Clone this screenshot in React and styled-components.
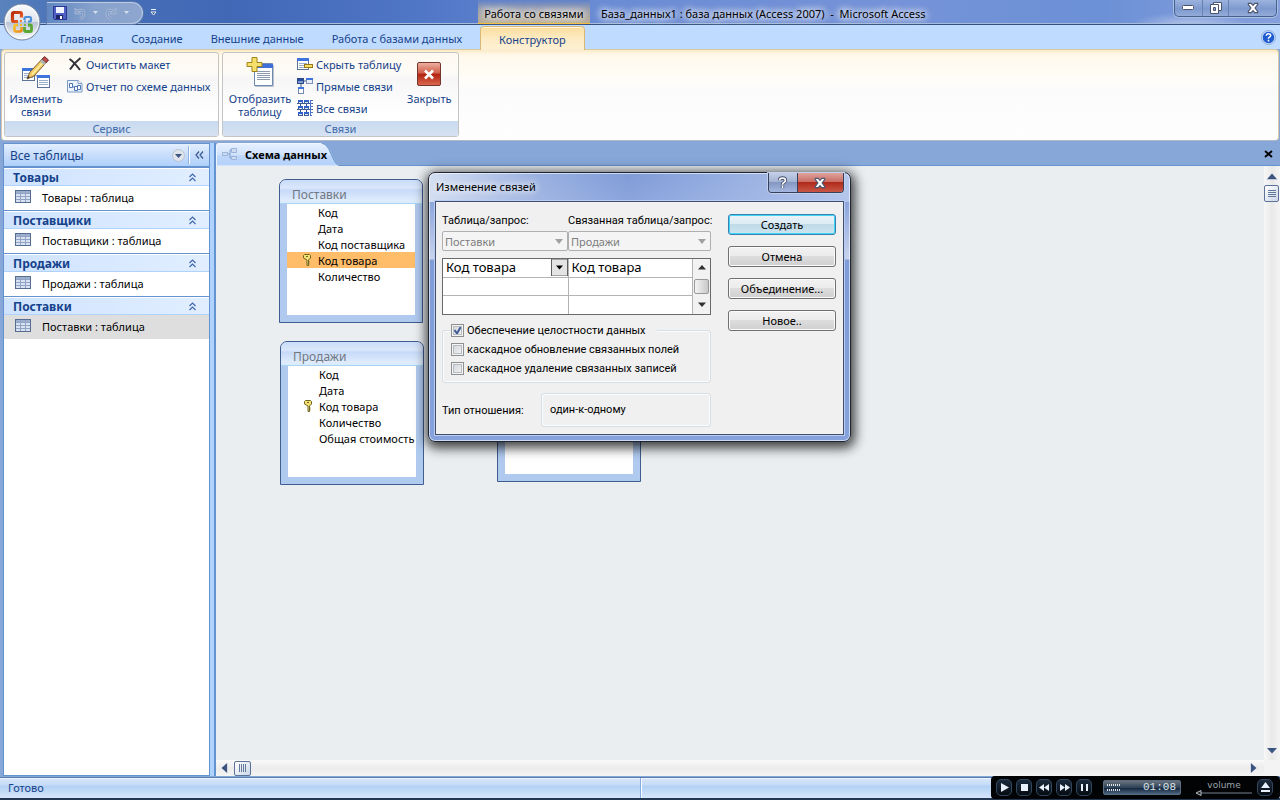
import React from "react";
import styled, { createGlobalStyle, css } from "styled-components";

const GlobalStyle = createGlobalStyle`
  *, *::before, *::after { box-sizing: border-box; }
  body { margin: 0; overflow: hidden; font-family: "Noto Sans", "Open Sans", sans-serif; font-size: 11px; line-height: 13px; color: #000; }
  button, select, input { font: inherit; color: inherit; margin: 0; padding: 0; }
  button { background: none; border: 0; }
  a { color: inherit; text-decoration: none; }
  svg { display: block; flex: none; }
  h1, h2, p, ul { margin: 0; padding: 0; font: inherit; list-style: none; }
`;

const Window = styled.div`
  position: relative;
  display: flex;
  flex-direction: column;
  height: 100vh;
  background: #86a7d8;
`;

/* ---------- title bar ---------- */
const TitleBar = styled.header`
  position: relative;
  display: flex;
  flex: none;
  height: 25px;
  background:
    radial-gradient(ellipse 60px 14px at 1190px 26px, #b9c8ea 0%, rgba(185, 200, 234, 0) 100%),
    linear-gradient(90deg, #5a83bd 0, #4a72b8 60px, #4068b5 230px, #5076c6 420px, #6a8cd4 600px, #7593d8 900px, #6c90d6 1100px, #86a0dc 1280px);
  border-bottom: 1px solid #33527f;
  box-shadow: inset 0 -1px #a5bcdc;
`;

const TitleStart = styled.div`
  flex: none;
  width: 478px;
  padding-left: 47px;
  display: flex;
  align-items: flex-start;
  gap: 7px;
`;

const OfficeButton = styled.button`
  position: absolute;
  left: 3px;
  top: 3px;
  z-index: 3;
`;

const QuickAccess = styled.div`
  display: flex;
  align-items: center;
  gap: 7px;
  width: 96px;
  height: 22px;
  margin-top: 2px;
  padding: 0 6px;
  border: 1px solid #b9cbe6;
  border-left: 0;
  border-radius: 0 12px 12px 0;
  box-shadow: 0 0 0 1px #5a78ac;
  background: linear-gradient(90deg, #6188c2, #87a2cc 50%, #8ea6cf);
`;

const QuickMore = styled.button`
  margin: 9px 0 0 0;
`;

const ContextTitle = styled.div`
  flex: none;
  width: 112px;
  height: 24px;
  padding-top: 7px;
  text-align: center;
  white-space: nowrap;
  background: linear-gradient(#5f82ca 0, #9b9fae 40%, #b9ad93 100%);
  border-bottom: 1px solid #f5bd35;
  text-shadow: 0 0 6px #fff, 0 0 8px #fff, 0 0 10px #fff;
`;

const WindowTitle = styled.h1`
  flex: 1;
  padding: 7px 0 0 11px;
  white-space: pre;
  text-shadow: 0 0 6px #fff, 0 0 8px #fff, 0 0 10px #fff;
`;

const CaptionButtons = styled.div`
  flex: none;
  display: flex;
  height: 17px;
  width: 103px;
  margin-right: 3px;
  border: 1px solid #47618f;
  border-top: 0;
  border-radius: 0 0 5px 5px;
  background: linear-gradient(#9cb3de, #7e99ce 55%, #93abd9);
  box-shadow: 0 0 0 1px #a9bfe4;
  overflow: hidden;
`;

const CaptionButton = styled.button`
  width: ${(p) => (p.$wide ? 48 : 27)}px;
  display: flex;
  align-items: center;
  justify-content: center;
  & + & { border-left: 1px solid #6781b4; }
`;

/* ---------- ribbon ---------- */
const TabRow = styled.nav`
  position: relative;
  display: flex;
  flex: none;
  align-items: stretch;
  height: 24px;
  padding-left: 46px;
  background: #bfdbff;
  color: #15428b;
`;

const Tab = styled.button`
  padding: 3px 14px 0;
  white-space: nowrap;
  ${(p) => p.$active && css`
    margin: 1px 0 -1px 4px;
    padding: 2px 18px 1px;
    border: 1px solid #dcb877;
    border-bottom: 0;
    border-radius: 4px 4px 0 0;
    background: linear-gradient(#fbdd9b, #fdebc4 50%, #fdf0d3);
    box-shadow: inset 0 1px #fff4d8;
    z-index: 1;
  `}
`;

const HelpButton = styled.button`
  margin: 0 4px 0 auto;
`;

const Ribbon = styled.section`
  display: flex;
  flex: none;
  gap: 3px;
  height: 92px;
  padding: 2px 2px 3px;
  margin: 0 1px;
  background: linear-gradient(#fbe9c4 0, #fff9ec 5px, #fffdf8 30px, #fbfbfb 40px, #fefefe 100%);
  border: 1px solid #d7c9a6;
  border-bottom-color: #b0b8c8;
  border-radius: 4px;
`;

const Group = styled.div`
  display: flex;
  flex-direction: column;
  border: 1px solid #c4c4c2;
  border-radius: 3px;
  color: #15428b;
  background: linear-gradient(#fffaf0, #fcfbf7 25%, #f6f6f6 30%, #ffffff 75%);
  width: ${(p) => p.$width}px;
  overflow: hidden;
`;

const GroupBody = styled.div`
  display: flex;
  flex: 1;
`;

const GroupTitle = styled.h2`
  flex: none;
  height: 15px;
  text-align: center;
  line-height: 15px;
  color: #3e6aaa;
  background: linear-gradient(#c9daf0, #d6e2f3);
`;

const BigButton = styled.button`
  display: flex;
  flex-direction: column;
  align-items: center;
  justify-content: flex-start;
  width: ${(p) => p.$width}px;
  padding-top: 3px;
  gap: 2px;
  line-height: 13px;
`;

const SmallColumn = styled.div`
  display: flex;
  flex-direction: column;
  align-items: flex-start;
`;

const SmallButton = styled.button`
  display: flex;
  align-items: center;
  gap: 3px;
  height: 22px;
  white-space: nowrap;
`;

/* ---------- work area ---------- */
const WorkArea = styled.div`
  display: flex;
  flex: 1;
  min-height: 0;
  padding: 2px 0 1px 3px;
`;

const NavPane = styled.aside`
  flex: none;
  display: flex;
  flex-direction: column;
  width: 207px;
  border: 1px solid #6593cf;
  background: #fff;
`;

const NavHeader = styled.div`
  display: flex;
  align-items: center;
  flex: none;
  height: 24px;
  padding: 0 0 0 6px;
  font-size: 12px;
  color: #15428b;
  background: linear-gradient(#e3efff, #c8ddfb 50%, #afd0fc);
  border-bottom: 2px solid #6593cf;
  span { flex: 1; }
`;

const NavIconButton = styled.button`
  display: flex;
  align-items: center;
  justify-content: center;
  height: 18px;
  width: 20px;
  & + & { border-left: 1px solid #fff; box-shadow: -1px 0 #8db2e3; margin-left: 1px; }
`;

const NavGroup = styled.section`
  border-bottom: 1px solid #6593cf;
  &:last-child { border: 0; }
`;

const NavGroupTitle = styled.button`
  display: flex;
  align-items: center;
  justify-content: space-between;
  width: 100%;
  height: 18px;
  padding: 0 13px 0 9px;
  font-size: 12px;
  font-weight: 700;
  color: #15428b;
  background: linear-gradient(90deg, #cfe3ff, #e1eeff);
  border-top: 1px solid #fff;
  border-bottom: 1px solid #b0d2ff;
`;

const NavItem = styled.a`
  display: flex;
  align-items: center;
  gap: 11px;
  height: 24px;
  padding: 0 0 2px 11px;
  background: ${(p) => (p.$selected ? "#dedede" : "#fff")};
  svg { margin-bottom: 2px; }
`;

const Splitter = styled.div`
  flex: none;
  width: 6px;
  background: #b0d2ff;
  border-right: 2px solid #6593cf;
`;

const Document = styled.main`
  flex: 1;
  min-width: 0;
  display: flex;
  flex-direction: column;
`;

const DocTabs = styled.div`
  flex: none;
  display: flex;
  justify-content: space-between;
  height: 23px;
  border-bottom: 1px solid #6593cf;
`;

const DocTab = styled.button`
  position: relative;
  display: flex;
  align-items: center;
  gap: 7px;
  height: 23px;
  padding: 0 13px 1px 6px;
  font-weight: 700;
  isolation: isolate;
  > svg:first-child { position: absolute; inset: 0; z-index: -1; width: 100%; height: 100%; }
`;

const CloseDoc = styled.button`
  padding: 0 7px 0 0;
`;

const CanvasGrid = styled.div`
  flex: 1;
  min-height: 0;
  display: grid;
  grid-template: minmax(0, 1fr) 16px / minmax(0, 1fr) 16px;
  background: #f3f3f3;
`;

const Canvas = styled.div`
  position: relative;
  background: #eaeef1;
  overflow: hidden;
`;

const VScroll = styled.div`
  display: flex;
  flex-direction: column;
  align-items: center;
  justify-content: space-between;
  padding: 5px 1px 4px 0;
  background: linear-gradient(90deg, #f7f7f7, #e9e9e9 50%, #f4f4f4);
`;

const HScroll = styled.div`
  display: flex;
  align-items: center;
  justify-content: space-between;
  padding: 0 5px 0 3px;
  background: linear-gradient(#f9f9f9, #ececec 50%, #f4f4f4);
`;

const ScrollStart = styled.div`
  display: flex;
  align-items: center;
  gap: ${(p) => (p.$vertical ? 4 : 5)}px;
  flex-direction: ${(p) => (p.$vertical ? "column" : "row")};
`;

const Thumb = styled.button`
  display: flex;
  align-items: center;
  justify-content: center;
  width: ${(p) => (p.$vertical ? 15 : 17)}px;
  height: ${(p) => (p.$vertical ? 17 : 15)}px;
  border: 1px solid #5d7298;
  border-radius: 2px;
  background: linear-gradient(135deg, #fff, #cbd7e8);
`;

/* ---------- relationship nodes ---------- */
const Node = styled.article`
  position: absolute;
  left: ${(p) => p.$x}px;
  top: ${(p) => p.$y}px;
  display: flex;
  flex-direction: column;
  width: 144px;
  height: 144px;
  border: 1px solid #3f5d8e;
  border-radius: 7px 7px 0 0;
  background: #b0caef;
  overflow: hidden;
`;

const NodeTitle = styled.h2`
  flex: none;
  height: 24px;
  padding: 7px 12px 0;
  font-size: 12px;
  line-height: 15px;
  color: #72777f;
  background: linear-gradient(#c9dcf8 0, #dbe8fb 8px, #c6daf8 10px, #deebfc 20px);
  border-bottom: 1px solid #a9d4f6;
  box-shadow: inset 0 -1px #d7edfc;
`;

const FieldList = styled.ul`
  flex: 1;
  margin: 0 7px 7px;
  background: #fff;
`;

const Field = styled.li`
  display: flex;
  align-items: center;
  height: 16px;
  padding-left: 16px;
  white-space: nowrap;
  background: ${(p) => (p.$selected ? "#ffbd69" : "transparent")};
`;

const KeySlot = styled.span`
  flex: none;
  width: 15px;
`;

/* ---------- dialog ---------- */
const Dialog = styled.div`
  position: absolute;
  left: 428px;
  top: 172px;
  z-index: 5;
  width: 423px;
  padding: 0 6px 6px;
  border: 1px solid #1d2434;
  border-radius: 7px;
  color: #000;
  background:
    linear-gradient(90deg, #d4def2 0, rgba(212, 222, 242, 0.3) 110px, rgba(130, 158, 218, 0) 200px) top / 100% 29px no-repeat,
    linear-gradient(90deg, rgba(0, 0, 0, 0) 200px, rgba(180, 198, 236, 0.6) 340px, #b4c6ec 100%) top / 100% 29px no-repeat,
    linear-gradient(#7f9cd8 0, #8ca5dc 29px, #c8d3ed 86px, #7f9cd8 87px, #86a2dc 100%);
  box-shadow: inset 0 0 0 1px rgba(255, 255, 255, 0.6), 1px 3px 12px 3px rgba(0, 0, 0, 0.75);
`;

const DialogTitleBar = styled.div`
  display: flex;
  justify-content: space-between;
  height: 28px;
  h2 { padding: 7px 0 0 1px; text-shadow: 0 0 6px #fff, 0 0 8px #fff; }
`;

const DialogCaption = styled.div`
  display: flex;
  width: 76px;
  height: 20px;
  border: 1px solid #35415c;
  border-top: 0;
  border-radius: 0 0 4px 4px;
  overflow: hidden;
  box-shadow: 0 0 0 1px #c2d0ec;
`;

const DialogCaptionButton = styled.button`
  display: flex;
  align-items: center;
  justify-content: center;
  width: ${(p) => (p.$danger ? 47 : 28)}px;
  background: ${(p) => (p.$danger
    ? "linear-gradient(#dfa39d, #c96f66 45%, #b02a1c 50%, #c95746)"
    : "linear-gradient(#c3cee6, #a5b4d4 45%, #8497c2 50%, #a5b7de)")};
  & + & { border-left: 1px solid #35415c; }
`;

const DialogBody = styled.form`
  display: flex;
  justify-content: space-between;
  height: 234px;
  padding: 12px 7px 0 6px;
  border: 1px solid #414f6d;
  box-shadow: 0 0 0 1px #b9cdf2;
  background: #f0f0f0;
`;

const labelFont = css`
  font-family: Roboto, "Noto Sans", sans-serif;
  font-size: 11px;
`;

const FormColumn = styled.div`
  width: 269px;
`;

const PairRow = styled.div`
  display: grid;
  grid-template-columns: 126px 143px;
`;

const PairLabel = styled.label`
  ${labelFont}
  height: 17px;
  white-space: nowrap;
`;

const DisabledSelect = styled.select`
  appearance: none;
  height: 20px;
  padding-left: 2px;
  border: 1px solid #afafaf;
  border-radius: 2px;
  color: #7d7d7d;
  opacity: 1;
  background: #f4f4f4 url("data:image/svg+xml,%3Csvg xmlns='http://www.w3.org/2000/svg' width='8' height='5'%3E%3Cpath d='M0 0h8L4 5z' fill='%23a0a0a0'/%3E%3C/svg%3E") right 4px center no-repeat;
`;

const FieldArea = styled.div`
  display: flex;
  height: 57px;
  margin-top: 7px;
  border: 1px solid #696969;
  background: #fff;
`;

const FieldTable = styled.table`
  flex: 1;
  border-collapse: collapse;
  table-layout: fixed;
  font-size: 13px;
  td { height: 18px; padding: 0 0 0 3px; border-right: 1px solid #b4b4b4; border-bottom: 1px solid #b4b4b4; }
  tr:last-child td { border-bottom: 0; }
  td:first-child { width: 125px; }
`;

const CellSelect = styled.select`
  display: block;
  appearance: none;
  width: 100%;
  height: 17px;
  border: 0;
  line-height: 17px;
  background: url("data:image/svg+xml,%3Csvg xmlns='http://www.w3.org/2000/svg' width='17' height='18'%3E%3Crect x='.5' y='.5' width='16' height='17' fill='%23e4e4e4' stroke='%23606060'/%3E%3Cpath d='M5 7h7l-3.500 4z'/%3E%3C/svg%3E") right center no-repeat;
`;

const GridScroll = styled.div`
  display: flex;
  flex-direction: column;
  align-items: center;
  justify-content: space-between;
  width: 17px;
  padding: 4px 0 5px;
  background: #f2f2f2;
`;

const GridThumb = styled.button`
  width: 15px;
  height: 15px;
  border: 1px solid #989898;
  border-radius: 2px;
  background: linear-gradient(90deg, #f4f4f4, #c8c8c8);
`;

const Options = styled.fieldset`
  ${labelFont}
  margin: 8px 0 0;
  padding: 3px 0 4px 8px;
  min-width: 0;
  border: 1px solid #d5dfe5;
  border-radius: 3px;
  box-shadow: inset 0 0 0 1px #fbfbfb;
  legend { padding: 0 11px 0 0; background: #f0f0f0; }
`;

const Check = styled.label`
  display: flex;
  align-items: center;
  gap: 3px;
  height: ${(p) => (p.$legend ? 14 : 19)}px;
  white-space: nowrap;
  input {
    appearance: none;
    flex: none;
    width: 13px;
    height: 13px;
    border: 1px solid #8e8f8f;
    box-shadow: inset 0 0 0 1px #f4f4f4, inset 0 0 0 2px #b6bcc2;
    background: linear-gradient(135deg, #cdd1d6, #f6f6f6);
  }
  input:checked {
    background: url("data:image/svg+xml,%3Csvg xmlns='http://www.w3.org/2000/svg' width='11' height='11'%3E%3Cpath d='M2.500 5l2.500 3.500L9 1.500' fill='none' stroke='%23405a98' stroke-width='2'/%3E%3C/svg%3E") center no-repeat, linear-gradient(135deg, #cdd1d6, #f6f6f6);
  }
`;

const RelationRow = styled.div`
  ${labelFont}
  display: flex;
  align-items: center;
  justify-content: space-between;
  margin-top: 10px;
`;

const RelationBox = styled.output`
  width: 170px;
  height: 34px;
  padding: 9px 8px;
  border: 1px solid #d5dfe5;
  border-radius: 3px;
  box-shadow: inset 0 0 0 1px #fbfbfb;
`;

const ButtonColumn = styled.div`
  display: flex;
  flex-direction: column;
  gap: 11px;
  width: 108px;
`;

const PushButton = styled.button`
  height: 21px;
  border: 1px solid ${(p) => (p.$primary ? "#3c7fb1" : "#707070")};
  border-radius: 3px;
  background: ${(p) => (p.$primary
    ? "linear-gradient(#eaf3f8, #dcebf3 50%, #c0dbe8 50%, #cbe6f1)"
    : "linear-gradient(#f2f2f2, #ebebeb 50%, #dddddd 50%, #cfcfcf)")};
  box-shadow: ${(p) => (p.$primary ? "inset 0 0 0 1px #3fd6f6" : "inset 0 0 0 1px #fafafa")};
`;

/* ---------- status bar ---------- */
const StatusBar = styled.footer`
  display: flex;
  flex: none;
  align-items: center;
  height: 23px;
  color: #15428b;
  border-top: 1px solid #567db0;
  border-bottom: 2px solid #243752;
  background: linear-gradient(#fff 0, #d7e6f9 1px, #c4dbf8 7px, #b3d0f5 8px, #d6e6fa 100%);
  span { flex: 1; padding: 0 0 1px 8px; }
  span + span { height: 100%; border-left: 1px solid #84aee0; box-shadow: inset 1px 0 #fff; }
`;

const Player = styled.div`
  position: absolute;
  right: 0;
  bottom: 1px;
  z-index: 6;
  display: flex;
  align-items: center;
  width: 289px;
  height: 23px;
  padding: 0 7px 0 5px;
  gap: 4px;
  border-radius: 4px;
  background: #020305;
`;

const PlayerButton = styled.button`
  display: flex;
  align-items: center;
  justify-content: center;
  width: 16px;
  height: 17px;
  border: 1px solid #33465c;
  border-radius: 5px;
  background: linear-gradient(#1a2a3c, #060b12);
`;

const PlayerDisplay = styled.div`
  display: flex;
  align-items: center;
  justify-content: space-between;
  width: 78px;
  height: 15px;
  margin: 0 10px 0 7px;
  padding: 0 4px 0 3px;
  font-family: "Liberation Mono", monospace;
  font-size: 11px;
  color: #dde4ea;
  border: 1px solid #5b6d80;
  border-radius: 2px;
  background: linear-gradient(#68727e, #2f4358 50%, #15273d 55%, #4c6480);
`;

const Volume = styled.label`
  flex: 1;
  display: flex;
  flex-direction: column;
  align-items: center;
  font-family: "DejaVu Sans", sans-serif;
  font-size: 9px;
  line-height: 10px;
  color: #9aa3ac;
`;

/* ---------- icons ---------- */
const turns = { up: 0, right: 90, down: 180, left: 270 };

const Triangle = ({ dir, color = "#3c5480", size = 10 }) => (
  <svg width={size} height={size} viewBox="0 0 8 8" aria-hidden="true">
    <path d="M0 6.500 4 2l4 4.500z" fill={color} transform={`rotate(${turns[dir]} 4 4)`} />
  </svg>
);

const OfficeLogo = () => (
  <svg width="38" height="38" viewBox="0 0 38 38" aria-hidden="true">
    <defs>
      <linearGradient id="orb" x1="0" y1="0" x2="0" y2="1">
        <stop offset="0" stopColor="#fbfcfd" />
        <stop offset="0.48" stopColor="#dfe4ec" />
        <stop offset="0.52" stopColor="#b9c3d3" />
        <stop offset="1" stopColor="#fff" />
      </linearGradient>
      <linearGradient id="red" x1="0" y1="0" x2="1" y2="1">
        <stop offset="0" stopColor="#b92d0a" /><stop offset="1" stopColor="#f0672a" />
      </linearGradient>
      <linearGradient id="gold" x1="0" y1="0" x2="1" y2="1">
        <stop offset="0" stopColor="#f6c62f" /><stop offset="1" stopColor="#f08a18" />
      </linearGradient>
    </defs>
    <circle cx="19" cy="19" r="18" fill="url(#orb)" stroke="#72839d" />
    <circle cx="19" cy="19" r="16.500" fill="none" stroke="#fff" opacity=".8" />
    <g fill="none" strokeLinejoin="round">
      <path d="M15 18.500H11Q9.500 18.500 9.500 17V11Q9.500 9.500 11 9.500h6Q18.500 9.500 18.500 11v3.500" stroke="url(#red)" strokeWidth="3.200" />
      <path d="M21.500 17v-1.500Q21.500 14 23 14h3.500Q28 14 28 15.500V17q0 1.500-1.500 1.500H25" stroke="#4a8fd8" strokeWidth="2.200" />
      <path d="M15 22h-2q-1.500 0-1.500 1.500V27q0 1.500 1.500 1.500h4q1.500 0 1.500-1.500v-3" stroke="url(#gold)" strokeWidth="2.600" />
      <path d="M25 22h2q1.500 0 1.500 1.500V27q0 1.500-1.500 1.500h-4q-1.500 0-1.500-1.500v-3" stroke="#5aa834" strokeWidth="2.800" />
    </g>
    <rect x="17" y="17" width="2" height="2" fill="#f2812c" />
    <rect x="21" y="17.500" width="2" height="2" fill="#5ca0e0" />
    <rect x="17" y="21" width="2" height="2" fill="#f5b92c" />
    <rect x="21" y="21" width="2" height="2" fill="#7cba48" />
  </svg>
);

const SaveIcon = () => (
  <svg width="14" height="14" viewBox="0 0 14 14" aria-hidden="true">
    <path d="M.5.500h13v13h-12l-1-1z" fill="#4f5fc4" stroke="#2c3593" />
    <rect x="3" y="1" width="8" height="6" fill="#eef3fd" />
    <rect x="3" y="9" width="7" height="4" fill="#1f2466" />
    <rect x="7" y="10" width="2" height="3" fill="#fff" />
  </svg>
);

const UndoIcon = ({ flip }) => (
  <svg width="12" height="13" viewBox="0 0 12 13" aria-hidden="true">
    <g transform={flip ? "matrix(-1 0 0 1 12 0)" : undefined}>
      <path d="M3 4.500Q10 1 10 6.500 10 10 6 11.500" fill="none" stroke="#b4c4de" strokeWidth="2.600" />
      <path d="M3 4.500Q10 1 10 6.500 10 10 6 11.500" fill="none" stroke="#7f98c0" strokeWidth="1.400" />
      <path d="M1 1v6h6z" fill="#8ea4c8" stroke="#b4c4de" strokeWidth=".6" />
    </g>
  </svg>
);

const SmallArrow = () => (
  <svg width="5" height="4" viewBox="0 0 5 4" aria-hidden="true"><path d="M0 0h5L2.500 3z" fill="#d6dfec" /></svg>
);

const MoreIcon = () => (
  <svg width="7" height="8" viewBox="0 0 7 8" aria-hidden="true">
    <path d="M1 .5h5M1 3h5L3.500 6z" stroke="#e8eefa" fill="#33518b" />
  </svg>
);

const MiniForm = ({ x, y, w = 11, h = 11 }) => (
  <g transform={`translate(${x} ${y})`}>
    <rect x=".5" y=".5" width={w} height={h} fill="#fff" stroke="#5a7396" />
    <rect width={w + 1} height="3" fill="#3f74dd" />
    <path d={`M2 5.500h${w - 3}M2 7.500h${w - 3}${h > 10 ? `M2 9.500h${w - 3}` : ""}`} stroke="#9cadc8" />
  </g>
);

const EditLinksIcon = () => (
  <svg width="32" height="34" viewBox="0 0 32 34" aria-hidden="true">
    <MiniForm x={2} y={12} w={12} h={12} />
    <path d="M13 17l7 6" stroke="#5c7395" />
    <MiniForm x={17} y={19} w={12} h={12} />
    <path d="M7 23l3-7L24 1l4 3.500L14 20z" fill="#f3cb62" stroke="#806032" />
    <path d="M12 18.500L26 3" stroke="#fff0a8" strokeWidth="1.500" />
    <path d="M22 3.500l2.500-3 4 3.500-2.500 3z" fill="#be4949" stroke="#703435" />
    <path d="M20 5.500l2-2 4 3.500-2 2z" fill="#a8b7b4" />
    <path d="M7 23l1-3 2 1z" fill="#333" />
  </svg>
);

const ClearIcon = () => (
  <svg width="16" height="16" viewBox="0 0 16 16" aria-hidden="true">
    <path d="M2.500 3Q7 6 13 14M13.500 2Q7 7 3 13.500" stroke="#303238" strokeWidth="2" fill="none" />
  </svg>
);

const ReportIcon = () => (
  <svg width="16" height="14" viewBox="0 0 16 14" aria-hidden="true">
    <path d="M.5 1.500H11l4 3V13H.5z" fill="#eaf2fd" stroke="#7e9ac4" />
    <path d="M11 1.500v3h4" fill="#fff" stroke="#7e9ac4" />
    <path d="M2.500 4.500h3v4h-3zM7.500 7.500h3v4h-3zM10.500 6.500h3v4h-3zM5.500 7l2 2" fill="#fff" stroke="#4d76b4" />
  </svg>
);

const ShowTableIcon = () => (
  <svg width="32" height="34" viewBox="0 0 32 34" aria-hidden="true">
    <path d="M10.500 7.500h18v22h-18z" fill="#fdfeff" stroke="#6f88ad" />
    <path d="M11 8h18v4H11z" fill="#3f70d8" />
    <path d="M13 15.500h13M13 17.500h13M13 19.500h13M13 21.500h13M13 23.500h13" stroke="#8d99ae" />
    <path d="M29.500 9v21.500H11" fill="none" stroke="#bac3d0" />
    <path d="M8 1.500h5v5h5v4h-5v5H8v-5H3v-4h5z" fill="#f6e06c" stroke="#a08318" />
  </svg>
);

const HideTableIcon = () => (
  <svg width="16" height="14" viewBox="0 0 16 14" aria-hidden="true">
    <MiniForm x={0} y={1} w={11} h={11} />
    <rect x="7.500" y="7.500" width="8" height="3" fill="#f8df64" stroke="#94791d" />
  </svg>
);

const DirectLinksIcon = () => (
  <svg width="16" height="16" viewBox="0 0 16 16" aria-hidden="true">
    <path d="M6 3h4M4 6v4" stroke="#3e5682" />
    <rect x=".5" y=".5" width="6" height="5" fill="#7f9bd0" stroke="#2c4a86" />
    <rect x="1" y="1" width="5" height="2" fill="#274aa6" />
    <rect x="9.500" y=".5" width="6" height="5" fill="#e8effb" stroke="#7e93b9" />
    <rect x="9" y="0" width="7" height="2" fill="#3f74dd" />
    <rect x="1.500" y="9.500" width="5" height="6" fill="#fff" stroke="#7389ae" />
    <rect x="1" y="9" width="6" height="2" fill="#3f74dd" />
  </svg>
);

const AllLinksIcon = () => (
  <svg width="16" height="16" viewBox="0 0 16 16" aria-hidden="true">
    <path d="M0 3.500h16M0 9.500h16M3.500 0v16M9.500 0v16" stroke="#3e5682" />
    {[[1, 0], [7, 0], [1, 6], [7, 6], [1, 12], [7, 12]].map(([x, y]) => (
      <g key={`${x}-${y}`}>
        <rect x={x + 0.5} y={y + 0.5} width="4" height="3" fill="#dde7f8" stroke="#3f5c94" />
        <rect x={x} y={y} width="5" height="2" fill="#2f5fc8" />
      </g>
    ))}
    <path d="M13 .5h3M13 3.500h2M13 6.500h3M13 9.500h2M13 12.500h3M13 15.500h2M13.500 0v16" stroke="#4a74cc" />
  </svg>
);

const CloseRedIcon = () => (
  <svg width="26" height="34" viewBox="0 0 26 34" aria-hidden="true">
    <defs>
      <linearGradient id="closeRed" x1="0" y1="0" x2="0" y2="1">
        <stop offset="0" stopColor="#eeb3a5" /><stop offset=".45" stopColor="#d1604b" />
        <stop offset=".52" stopColor="#b22410" /><stop offset="1" stopColor="#dc6a52" />
      </linearGradient>
    </defs>
    <rect x="1.500" y="6.500" width="23" height="23" rx="1.500" fill="url(#closeRed)" stroke="#73362c" />
    <path d="M9 14.500l8 8M17 14.500l-8 8" stroke="#fff" strokeWidth="2.600" />
  </svg>
);

const TableIcon = () => (
  <svg width="16" height="13" viewBox="0 0 16 13" aria-hidden="true">
    <rect x=".5" y=".5" width="15" height="12" fill="#fff" stroke="#566d92" />
    <path d="M1 1h14v2H1z" fill="#9db0d0" />
    <path d="M1 4h4v2H1zM6 4h4v2H6zM11 4h4v2h-4zM1 7h4v2H1zM6 7h4v2H6zM11 7h4v2h-4zM1 10h4v2H1zM6 10h4v2H6zM11 10h4v2h-4z" fill="#d9e2f2" />
    <path d="M1 3.500h14M1 6.500h14M1 9.500h14M5.500 1v11M10.500 1v11" stroke="#91a4c4" />
  </svg>
);

const ChevronsUp = () => (
  <svg width="7" height="9" viewBox="0 0 7 9" aria-hidden="true">
    <path d="M.5 4l3-3 3 3M.5 8l3-3 3 3" fill="none" stroke="#3f68ac" strokeWidth="1.200" />
  </svg>
);

const ChevronsLeft = () => (
  <svg width="9" height="8" viewBox="0 0 9 8" aria-hidden="true">
    <path d="M4 .5L1 4l3 3.500M8 .5L5 4l3 3.500" fill="none" stroke="#33568f" strokeWidth="1.200" />
  </svg>
);

const DropCircle = () => (
  <svg width="13" height="13" viewBox="0 0 13 13" aria-hidden="true">
    <circle cx="6.500" cy="6.500" r="6" fill="#dfe3ea" stroke="#b9c2d2" />
    <path d="M3 5h7L6.500 9z" fill="#3c5480" />
  </svg>
);

const KeyIcon = () => (
  <svg width="8" height="12" viewBox="0 0 8 12" aria-hidden="true">
    <path d="M1.500.500h5l1 1v2.500L5.500 6v5.500H4V6L.5 4V1.500z" fill="#f5e272" stroke="#6f6526" />
    <path d="M5 8h1.500M5 10h1.500M3 2.500h2" stroke="#6f6526" />
  </svg>
);

const DocTabShape = () => (
  <svg viewBox="0 0 122 23" preserveAspectRatio="none" aria-hidden="true">
    <defs>
      <linearGradient id="docTab" x1="0" y1="0" x2="0" y2="1">
        <stop offset="0" stopColor="#e6f0ff" /><stop offset=".5" stopColor="#d0e2fb" />
        <stop offset=".55" stopColor="#bdd6fb" /><stop offset="1" stopColor="#b5d2fb" />
      </linearGradient>
    </defs>
    <path d="M.5 23V3Q.5.500 3 .500H103Q108 .500 111 6L116 17Q119 22.500 122 22.500V23z" fill="url(#docTab)" stroke="#eff5ff" />
    <path d="M104 .500Q108 .500 111 6L116 17Q119 22.500 122 22.500" fill="none" stroke="#6593cf" />
  </svg>
);

const RelationIcon = () => (
  <svg width="16" height="14" viewBox="0 0 16 14" aria-hidden="true">
    <path d="M5 7h3M8 3v8M8 3h2M8 11h2" stroke="#7fa0cd" fill="none" />
    <path d="M.5 5.500h5v3h-5zM9.500 1.500h5v4h-5zM9.500 9.500h5v3h-5z" fill="#cfdcf0" stroke="#9bb5da" />
  </svg>
);

const HelpIcon = () => (
  <svg width="15" height="15" viewBox="0 0 15 15" aria-hidden="true">
    <circle cx="7.500" cy="7.500" r="6.500" fill="#1f5cd0" stroke="#c8dcfb" strokeWidth="1.500" />
    <circle cx="7.500" cy="7.500" r="7" fill="none" stroke="#6f91c4" strokeWidth=".6" />
    <path d="M5.300 5.700q.2-2 2.200-2t2.200 1.800q0 1-1.200 1.700t-1 1.500M7.500 9.800v1.700" fill="none" stroke="#fff" strokeWidth="1.500" />
  </svg>
);

const OutlineCross = ({ width = 14 }) => (
  <svg width={width} height="12" viewBox="0 0 12 10" aria-hidden="true">
    <path d="M2 1h2.500L6 2.800 7.500 1H10v1L7.800 5 10 8v1H7.500L6 7.200 4.500 9H2V8l2.200-3L2 2z" fill="#fff" stroke="#4d5670" />
  </svg>
);

const DocClose = () => (
  <svg width="9" height="8" viewBox="0 0 9 8" aria-hidden="true">
    <path d="M1 1l7 6M8 1L1 7" stroke="#000" strokeWidth="1.800" />
  </svg>
);

const GripLines = ({ vertical }) => (
  <svg width="8" height="8" viewBox="0 0 8 8" aria-hidden="true">
    <path d={vertical ? "M0 .500h8M0 2.500h8M0 4.500h8M0 6.500h8" : "M.5 0v8M2.500 0v8M4.500 0v8M6.500 0v8"} stroke="#64789c" />
  </svg>
);

const playerShapes = {
  Play: "M2 1v9l8-4.500z",
  Stop: "M2 2h7v7H2z",
  Back: "M0 5.500L5 2v7zM5 5.500L10 2v7z",
  Forward: "M1 2l5 3.500L1 9zM6 2l5 3.500L6 9z",
  Pause: "M2 2h2v7H2zM7 2h2v7H7z",
  Eject: "M5.500 0L10 6H1zM1 8h9v2H1z",
};

const PlayerControl = ({ name }) => (
  <PlayerButton aria-label={name}>
    <svg width="11" height="11" viewBox="0 0 11 11" aria-hidden="true"><path d={playerShapes[name]} fill="#e8f1fb" /></svg>
  </PlayerButton>
);

/* ---------- data ---------- */
const tabs = ["Главная", "Создание", "Внешние данные", "Работа с базами данных"];
const tables = ["Товары", "Поставщики", "Продажи", "Поставки"];
const nodes = [
  { title: "Поставки", x: 63, y: 13, fields: ["Код", "Дата", "Код поставщика", "Код товара", "Количество"], selected: true },
  { title: "Продажи", x: 64, y: 175, fields: ["Код", "Дата", "Код товара", "Количество", "Общая стоимость"] },
  { title: "", x: 281, y: 172, fields: [] },
];

function RelationNode({ node }) {
  return (
    <Node $x={node.x} $y={node.y}>
      <NodeTitle>{node.title}</NodeTitle>
      <FieldList>
        {node.fields.map((field) => {
          const isKey = field === "Код товара";
          return (
            <Field key={field} $selected={isKey && node.selected}>
              <KeySlot>{isKey && <KeyIcon />}</KeySlot>
              {field}
            </Field>
          );
        })}
      </FieldList>
    </Node>
  );
}

function EditRelationsDialog() {
  return (
    <Dialog role="dialog" aria-labelledby="dialog-title">
      <DialogTitleBar>
        <h2 id="dialog-title">Изменение связей</h2>
        <DialogCaption>
          <DialogCaptionButton aria-label="Справка">
            <svg width="11" height="13" viewBox="0 0 9 12" aria-hidden="true">
              <path d="M1.800 4Q1.800 1.800 4.500 1.800T7.200 4Q7.200 5.300 5.800 6 4.500 6.600 4.500 8M4.500 9v2" fill="none" stroke="#47506a" strokeWidth="3.200" />
              <path d="M1.800 4Q1.800 1.800 4.500 1.800T7.200 4Q7.200 5.300 5.800 6 4.500 6.600 4.500 8M4.500 9v2" fill="none" stroke="#fff" strokeWidth="1.500" />
            </svg>
          </DialogCaptionButton>
          <DialogCaptionButton $danger aria-label="Закрыть окно"><OutlineCross /></DialogCaptionButton>
        </DialogCaption>
      </DialogTitleBar>
      <DialogBody onSubmit={(e) => e.preventDefault()}>
        <FormColumn>
          <PairRow>
            <PairLabel htmlFor="left-table">Таблица/запрос:</PairLabel>
            <PairLabel htmlFor="right-table">Связанная таблица/запрос:</PairLabel>
            <DisabledSelect id="left-table" disabled><option>Поставки</option></DisabledSelect>
            <DisabledSelect id="right-table" disabled><option>Продажи</option></DisabledSelect>
          </PairRow>
          <FieldArea>
            <FieldTable>
              <tbody>
                <tr>
                  <td><CellSelect aria-label="Поле таблицы"><option>Код товара</option></CellSelect></td>
                  <td>Код товара</td>
                </tr>
                <tr><td /><td /></tr>
                <tr><td /><td /></tr>
              </tbody>
            </FieldTable>
            <GridScroll>
              <Triangle dir="up" color="#333" size={8} />
              <GridThumb type="button" aria-label="Прокрутка" />
              <Triangle dir="down" color="#333" size={8} />
            </GridScroll>
          </FieldArea>
          <Options>
            <legend><Check $legend><input type="checkbox" defaultChecked />Обеспечение целостности данных</Check></legend>
            <Check><input type="checkbox" />каскадное обновление связанных полей</Check>
            <Check><input type="checkbox" />каскадное удаление связанных записей</Check>
          </Options>
          <RelationRow>
            <span>Тип отношения:</span>
            <RelationBox>один-к-одному</RelationBox>
          </RelationRow>
        </FormColumn>
        <ButtonColumn>
          <PushButton $primary type="submit">Создать</PushButton>
          <PushButton type="button">Отмена</PushButton>
          <PushButton type="button">Объединение...</PushButton>
          <PushButton type="button">Новое..</PushButton>
        </ButtonColumn>
      </DialogBody>
    </Dialog>
  );
}

export default function App() {
  return (
    <>
      <GlobalStyle />
      <Window>
        <OfficeButton aria-label="Office"><OfficeLogo /></OfficeButton>
        <TitleBar>
          <TitleStart>
            <QuickAccess>
              <button aria-label="Сохранить"><SaveIcon /></button>
              <button aria-label="Отменить"><UndoIcon /></button>
              <SmallArrow />
              <button aria-label="Вернуть"><UndoIcon flip /></button>
              <SmallArrow />
            </QuickAccess>
            <QuickMore aria-label="Настройка панели"><MoreIcon /></QuickMore>
          </TitleStart>
          <ContextTitle>Работа со связями</ContextTitle>
          <WindowTitle>{"База_данных1 : база данных (Access 2007)  -  Microsoft Access"}</WindowTitle>
          <CaptionButtons>
            <CaptionButton aria-label="Свернуть">
              <svg width="12" height="6" viewBox="0 0 12 6" aria-hidden="true"><rect x=".5" y=".5" width="11" height="4" rx="1" fill="#fff" stroke="#4d5670" /></svg>
            </CaptionButton>
            <CaptionButton aria-label="Развернуть">
              <svg width="12" height="12" viewBox="0 0 12 12" aria-hidden="true">
                <path d="M3.500.500h8v8h-8z" fill="#fff" stroke="#4d5670" />
                <path d="M.5 2.500h8v9h-8z" fill="#fff" stroke="#4d5670" />
                <path d="M3.500 5.500h2v3h-2z" fill="#8ea6d4" stroke="#4d5670" />
              </svg>
            </CaptionButton>
            <CaptionButton $wide aria-label="Закрыть Access"><OutlineCross /></CaptionButton>
          </CaptionButtons>
        </TitleBar>
        <TabRow>
          {tabs.map((t) => <Tab key={t}>{t}</Tab>)}
          <Tab $active>Конструктор</Tab>
          <HelpButton aria-label="Справка Access"><HelpIcon /></HelpButton>
        </TabRow>
        <Ribbon>
          <Group $width={215}>
            <GroupBody>
              <BigButton $width={62}><EditLinksIcon /><span>Изменить<br />связи</span></BigButton>
              <SmallColumn>
                <SmallButton><ClearIcon />Очистить макет</SmallButton>
                <SmallButton><ReportIcon />Отчет по схеме данных</SmallButton>
              </SmallColumn>
            </GroupBody>
            <GroupTitle>Сервис</GroupTitle>
          </Group>
          <Group $width={237}>
            <GroupBody>
              <BigButton $width={74}><ShowTableIcon /><span>Отобразить<br />таблицу</span></BigButton>
              <SmallColumn>
                <SmallButton><HideTableIcon />Скрыть таблицу</SmallButton>
                <SmallButton><DirectLinksIcon />Прямые связи</SmallButton>
                <SmallButton><AllLinksIcon />Все связи</SmallButton>
              </SmallColumn>
              <BigButton $width={56}><CloseRedIcon /><span>Закрыть</span></BigButton>
            </GroupBody>
            <GroupTitle>Связи</GroupTitle>
          </Group>
        </Ribbon>
        <WorkArea>
          <NavPane>
            <NavHeader>
              <span>Все таблицы</span>
              <NavIconButton aria-label="Выбор категории"><DropCircle /></NavIconButton>
              <NavIconButton aria-label="Свернуть область"><ChevronsLeft /></NavIconButton>
            </NavHeader>
            {tables.map((name) => (
              <NavGroup key={name}>
                <NavGroupTitle>{name}<ChevronsUp /></NavGroupTitle>
                <NavItem href="#" $selected={name === "Поставки"}><TableIcon />{name} : таблица</NavItem>
              </NavGroup>
            ))}
          </NavPane>
          <Splitter />
          <Document>
            <DocTabs>
              <DocTab><DocTabShape /><RelationIcon />Схема данных</DocTab>
              <CloseDoc aria-label="Закрыть вкладку"><DocClose /></CloseDoc>
            </DocTabs>
            <CanvasGrid>
              <Canvas>{nodes.map((n) => <RelationNode key={n.x} node={n} />)}</Canvas>
              <VScroll>
                <ScrollStart $vertical>
                  <Triangle dir="up" />
                  <Thumb $vertical aria-label="Вертикальная прокрутка"><GripLines vertical /></Thumb>
                </ScrollStart>
                <Triangle dir="down" />
              </VScroll>
              <HScroll>
                <ScrollStart>
                  <Triangle dir="left" />
                  <Thumb aria-label="Горизонтальная прокрутка"><GripLines /></Thumb>
                </ScrollStart>
                <Triangle dir="right" />
              </HScroll>
            </CanvasGrid>
          </Document>
        </WorkArea>
        <StatusBar><span>Готово</span><span /></StatusBar>
        <EditRelationsDialog />
        <Player>
          {["Play", "Stop", "Back", "Forward", "Pause"].map((n) => <PlayerControl key={n} name={n} />)}
          <PlayerDisplay>
            <svg width="14" height="7" viewBox="0 0 14 7" aria-hidden="true">
              <path d="M0 1h14M0 6h14" stroke="#dde4ea" strokeWidth="2" strokeDasharray="1 1" />
            </svg>
            01:08
          </PlayerDisplay>
          <Volume>
            volume
            <svg width="56" height="6" viewBox="0 0 56 6" aria-hidden="true">
              <path d="M5 3h51" stroke="#77828f" />
              <path d="M0 3l5-2.500v5z" fill="#222" stroke="#b5bec8" />
            </svg>
          </Volume>
          <PlayerControl name="Eject" />
        </Player>
      </Window>
    </>
  );
}
